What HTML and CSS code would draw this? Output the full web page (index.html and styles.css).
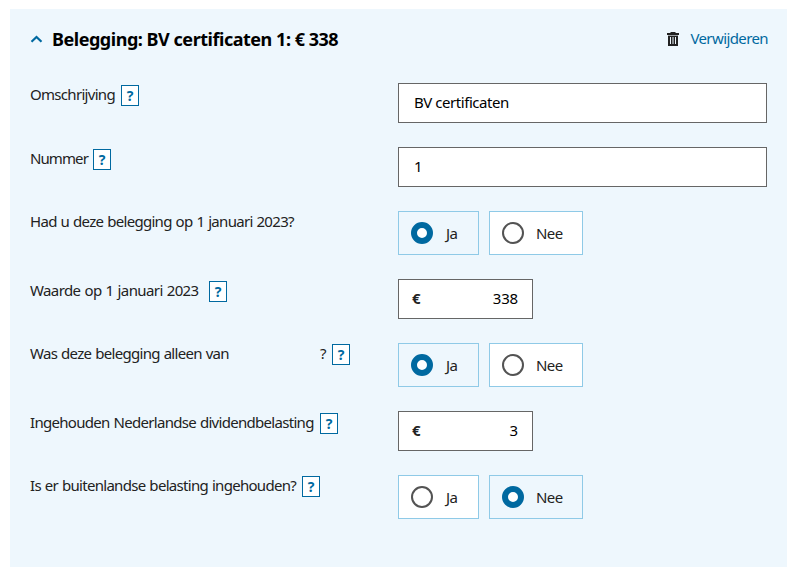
FILE: index.html
```
<!DOCTYPE html>
<html lang="nl">
<head>
	<meta charset="UTF-8">
	<title>Belegging</title>
	<link rel="stylesheet" href="styles.css">
</head>
<body>
	<form class="panel">
		<div class="head">
			<svg class="arrow" width="14" height="10" viewBox="0 0 14 10"><path d="M1.5 7.8 L6.5 3 L11.5 7.8"/></svg>
			<h2 class="title">Belegging: BV certificaten 1: € 338</h2>
			<svg class="trash" width="12" height="14" viewBox="0 0 12 14"><path d="M3.5 0h5v1H12v2H0V1h3.5zM1 4h10v10H1zM3 5v7h1V5zM5.5 5v7h1V5zM8 5v7h1V5z" fill-rule="evenodd"/><path d="M1 3h10v1H1z" opacity=".4"/></svg>
			<a class="remove">Verwijderen</a>
		</div>
		<div class="line">
			<div class="label"><span class="text t1">Omschrijving</span><span class="help">?</span></div>
			<input class="field" type="text" value="BV certificaten">
		</div>
		<div class="line">
			<div class="label"><span class="text t2">Nummer</span><span class="help">?</span></div>
			<input class="field" type="text" value="1">
		</div>
		<div class="line">
			<div class="label up"><span class="text">Had u deze belegging op 1 januari 2023?</span></div>
			<div class="options">
				<label class="option on"><input class="radio" type="radio" name="bezit" checked>Ja</label>
				<label class="option nee"><input class="radio" type="radio" name="bezit">Nee</label>
			</div>
		</div>
		<div class="line">
			<div class="label"><span class="text t4">Waarde op 1 januari 2023</span><span class="help">?</span></div>
			<div class="money"><b class="euro">€</b><input class="amount" type="text" value="338"></div>
		</div>
		<div class="line">
			<div class="label up"><span class="text t5">Was deze belegging alleen van</span><span class="text">?</span><span class="help">?</span></div>
			<div class="options">
				<label class="option on"><input class="radio" type="radio" name="alleen" checked>Ja</label>
				<label class="option nee"><input class="radio" type="radio" name="alleen">Nee</label>
			</div>
		</div>
		<div class="line">
			<div class="label"><span class="text t6">Ingehouden Nederlandse dividendbelasting</span><span class="help">?</span></div>
			<div class="money"><b class="euro">€</b><input class="amount" type="text" value="3"></div>
		</div>
		<div class="line">
			<div class="label up"><span class="text t7">Is er buitenlandse belasting ingehouden?</span><span class="help">?</span></div>
			<div class="options">
				<label class="option"><input class="radio" type="radio" name="buitenland">Ja</label>
				<label class="option nee on"><input class="radio" type="radio" name="buitenland" checked>Nee</label>
			</div>
		</div>
	</form>
</body>
</html>
```
FILE: styles.css
```
*{
	box-sizing: border-box;
}
body{
	margin: 0;padding: 9px 10px;background-color: #fff;
	font-family: "Noto Sans","Open Sans",sans-serif;font-size: 15px;color: #222;
}
.panel{
	height: 558px;padding: 20px 20px 0;background-color: #eef7fd;
}
.head{
	display: flex;align-items: center;height: 20px;margin-bottom: 34px;
}
.arrow{
	fill: none;stroke: #0069a0;stroke-width: 2.2;
}
.title{
	margin: 0 auto 0 8px;font-size: 18px;line-height: 20px;letter-spacing: -0.47px;color: #000;white-space: nowrap;
}
.trash{
	fill: #222;margin-right: 11px;
}
.remove{
	color: #0069a0;margin-right: -1px;padding-bottom: 2px;letter-spacing: -0.6px;
}
.line{
	display: grid;grid-template-columns: 368px 369px;align-items: start;margin-bottom: 24px;
}
.label{
	display: flex;padding-top: 2px;
}
.up{
	padding-top: 1px;
}
.text{
	line-height: 18px;letter-spacing: -0.7px;word-spacing: 0.7px;white-space: nowrap;
}
.t1{
	width: 91px;
}
.t2{
	width: 63px;letter-spacing: -0.9px;
}
.t4{
	width: 179px;letter-spacing: -0.6px;
}
.t5{
	width: 290px;
}
.t5 + .text{
	width: 12px;
}
.t6{
	width: 290px;
}
.t7{
	width: 272px;
}
.help{
	width: 18px;height: 21px;border: 1px solid #0069a0;background-color: #fff;
	color: #0069a0;font-size: 14px;font-weight: bold;line-height: 20px;text-align: center;
}
.field{
	width: 369px;height: 40px;margin: 0;padding: 0 15px 2px;border: 1px solid #666;border-radius: 0;
	background-color: #fff;font: inherit;letter-spacing: -0.45px;color: #000;
}
.options{
	display: flex;gap: 10px;
}
.option{
	display: flex;align-items: center;width: 81px;height: 44px;padding-left: 12px;
	border: 1px solid #8fcae7;background-color: #fff;line-height: 18px;letter-spacing: -0.6px;
}
.nee{
	width: 94px;
}
.on{
	background-color: #eef7fd;
}
.radio{
	appearance: none;width: 22px;height: 22px;margin: 0 13px 0 0;border: 2px solid #535353;border-radius: 50%;background-color: #fff;
}
.nee .radio{
	margin-right: 12px;
}
.radio:checked{
	border: 6px solid #0069a0;
}
.money{
	display: flex;align-items: center;width: 135px;height: 40px;padding: 0 14px 2px 13px;border: 1px solid #666;background-color: #fff;
}
.amount{
	flex: 1;min-width: 0;padding: 0;border: 0;background: none;font: inherit;letter-spacing: -0.2px;text-align: right;color: #000;
}
```
